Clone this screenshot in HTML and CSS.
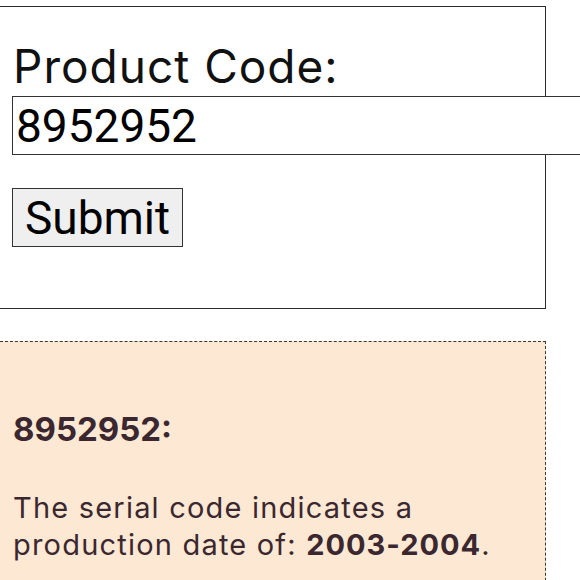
FILE: index.html
```html
<!DOCTYPE html>
<html lang="en">
<head>
<meta charset="utf-8">
<title>Product Code Lookup</title>
<link rel="stylesheet" href="styles.css">
</head>
<body>
<main class="page">
  <form class="lookup-form">
    <label class="field-label" for="code">Product Code:</label>
    <input class="code-input" id="code" type="text" value="8952952">
    <div class="actions">
      <button class="submit-btn" type="button">Submit</button>
    </div>
  </form>
  <section class="result">
    <h3 class="result-title">8952952:</h3>
    <p class="result-text">The serial code indicates a production date of: <strong>2003-2004</strong>.</p>
  </section>
</main>
</body>
</html>
```

FILE: styles.css
```css
html, body {
  margin: 0;
  padding: 0;
  background: #ffffff;
  overflow: hidden;
}

.page {
  padding-top: 6px;
  font-family: Inter, "Noto Sans", sans-serif;
}

.lookup-form {
  box-sizing: border-box;
  width: 546px;
  height: 303px;
  border: 1px solid #2b2b2b;
  border-left: none;
  padding: 30px 0 0 12px;
}

.field-label {
  display: block;
  font-size: 46px;
  font-weight: 400;
  letter-spacing: 1px;
  line-height: 58px;
  color: #111111;
  margin-left: 1px;
}

.code-input {
  display: block;
  box-sizing: border-box;
  width: 640px;
  height: 59px;
  margin: 1px 0 0 0;
  padding: 0 3px;
  font-family: Roboto, "Liberation Sans", sans-serif;
  font-size: 46px;
  color: #000000;
  background: #ffffff;
  border: 1px solid #333333;
  outline: none;
}

.actions {
  margin-top: 33px;
}

.submit-btn {
  box-sizing: border-box;
  height: 59px;
  padding: 0 12px;
  font-family: Roboto, "Liberation Sans", sans-serif;
  font-size: 46px;
  color: #000000;
  background: #efefef;
  border: 1px solid #333333;
  border-radius: 0;
}

.result {
  box-sizing: border-box;
  width: 546px;
  height: 260px;
  margin-top: 32px;
  padding: 1px 0 0 12px;
  background: #fde9d3;
  border: 1px dashed #3f3535;
  border-left: none;
  border-bottom: none;
  color: #3b2730;
}

.result-title {
  margin: 66px 0 0 1px;
  font-size: 33px;
  font-weight: 700;
  line-height: 40px;
}

.result-text {
  margin: 40px 0 0 1px;
  font-size: 29px;
  font-weight: 400;
  letter-spacing: 1.2px;
  line-height: 37px;
}

.result-text strong {
  font-weight: 700;
  letter-spacing: 1px;
}
```
